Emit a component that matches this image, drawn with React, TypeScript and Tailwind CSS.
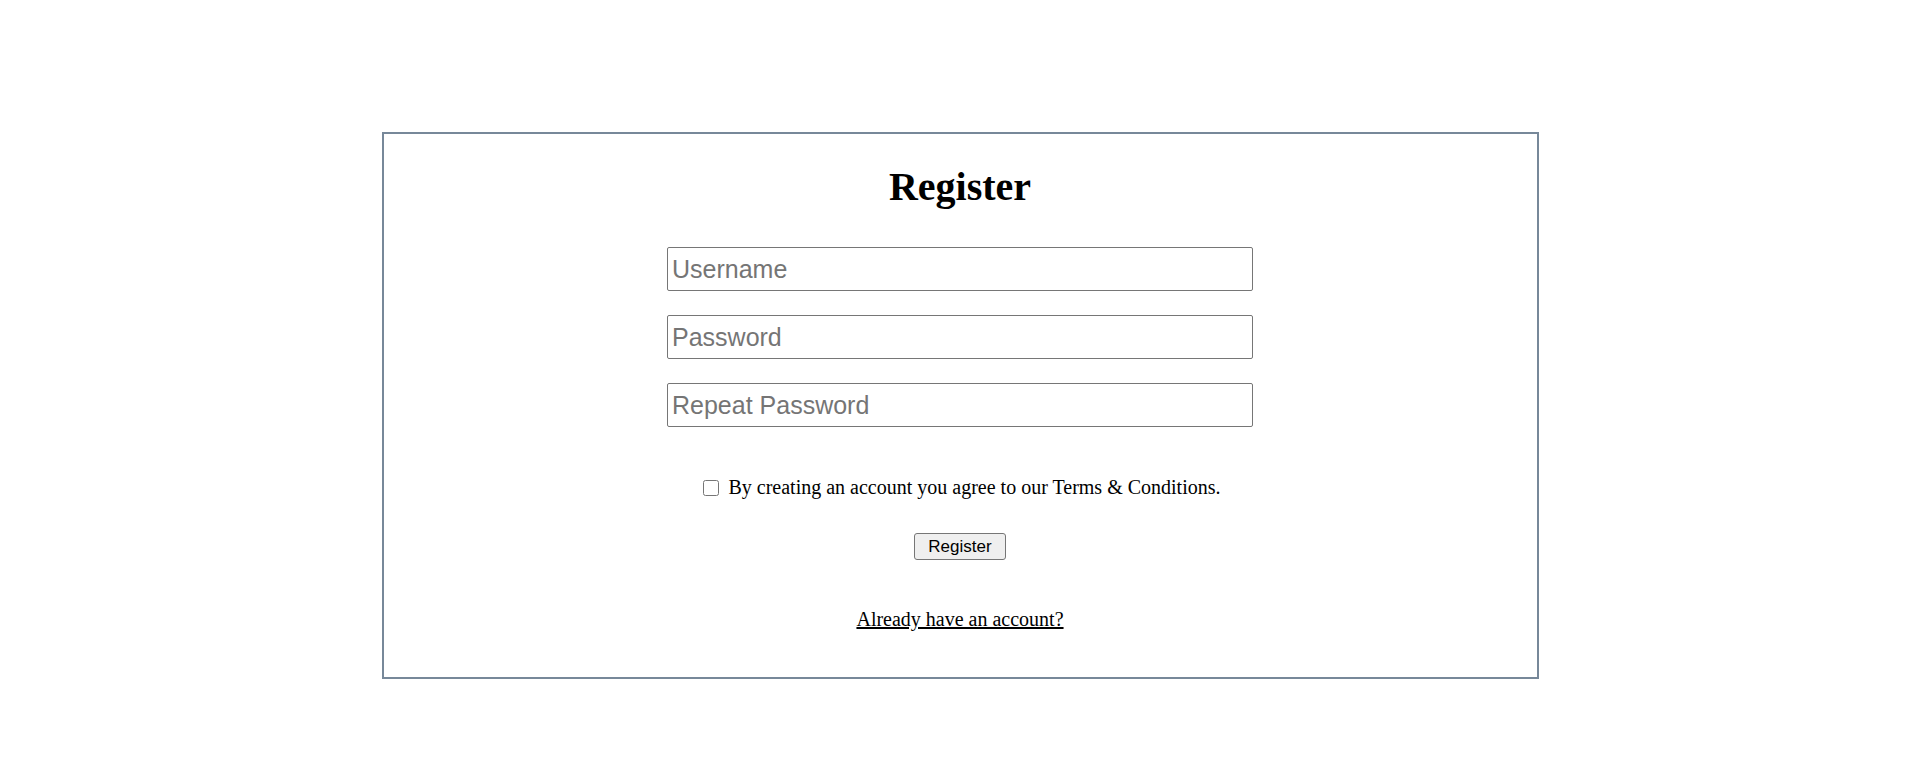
export default function App() {
  return (
    <div className="min-h-screen bg-white pt-[132px] font-['Liberation_Serif','Times_New_Roman',serif] text-black">
      {/* Register card */}
      <form
        className="mx-auto flex w-[1157px] flex-col items-center border-2 border-[#778899] pt-[30px] pb-[46px]"
        onSubmit={(e) => e.preventDefault()}
      >
        <h1 className="text-[40px] leading-[46px] font-bold">Register</h1>

        <div className="mt-[37px] flex w-[586px] flex-col gap-6">
          {['Username', 'Password', 'Repeat Password'].map((label) => (
            <input
              key={label}
              type={label === 'Username' ? 'text' : 'password'}
              placeholder={label}
              className="h-[44px] w-full rounded-[2px] border border-[#767676] pt-[1px] pr-[3px] pl-[4px] font-['Liberation_Sans',Arial,sans-serif] text-[25px] text-black outline-none placeholder:text-[#757575]"
            />
          ))}
        </div>

        <label className="mt-[49px] flex items-center gap-[9px] pl-[4px] text-[20px] leading-[23px]">
          <input type="checkbox" className="m-0 h-[16px] w-[16px]" />
          <span>By creating an account you agree to our Terms &amp; Conditions.</span>
        </label>

        <button
          type="submit"
          className="mt-[34px] flex h-[27px] w-[92px] items-center justify-center rounded-[3px] border border-[#767676] bg-[#efefef] font-['Liberation_Sans',Arial,sans-serif] text-[17px] text-black"
        >
          Register
        </button>

        <a href="#" className="mt-[48px] text-[20px] leading-[23px] text-black underline">
          Already have an account?
        </a>
      </form>
    </div>
  );
}
